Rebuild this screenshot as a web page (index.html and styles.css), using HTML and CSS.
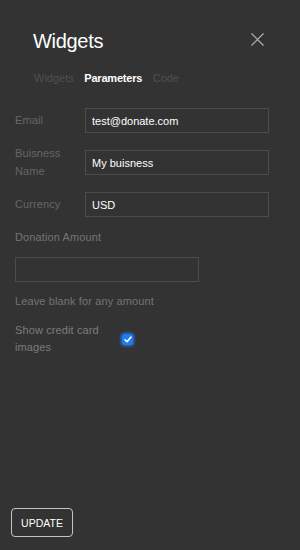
FILE: index.html
```html
<!DOCTYPE html>
<html lang="en">
<head>
    <meta charset="UTF-8">
    <meta name="viewport" content="width=device-width, initial-scale=1.0">
    <title>Widgets</title>
    <link rel="stylesheet" href="styles.css">
</head>
<body>
    <div class="panel">
        <div class="header">
            <h1>Widgets</h1>
            <svg class="close" width="13" height="13" viewBox="0 0 13 13">
                <path d="M0.5 0.5 L12.5 12.5 M12.5 0.5 L0.5 12.5" stroke="#b4b4b4" stroke-width="1.1" fill="none"/>
            </svg>
        </div>
        <div class="tabs">
            <span class="tab">Widgets</span>
            <span class="tab active">Parameters</span>
            <span class="tab">Code</span>
        </div>
        <div class="form">
            <div class="row">
                <label>Email</label>
                <input type="text" value="test@donate.com">
            </div>
            <div class="row">
                <label>Buisness<br>Name</label>
                <input type="text" value="My buisness">
            </div>
            <div class="row">
                <label>Currency</label>
                <input type="text" value="USD">
            </div>
            <div class="block">
                <label>Donation Amount</label>
                <input type="text" class="amount" value="">
                <p class="hint">Leave blank for any amount</p>
            </div>
            <div class="check-row">
                <label>Show credit card images</label>
                <span class="checkbox">
                    <svg width="8" height="7" viewBox="0 0 8 7">
                        <path d="M1 3.8 L3 5.8 L7 1" stroke="#fff" stroke-width="1.6" fill="none" stroke-linecap="round" stroke-linejoin="round"/>
                    </svg>
                </span>
            </div>
        </div>
        <div class="footer">
            <button class="update">UPDATE</button>
        </div>
    </div>
</body>
</html>
```

FILE: styles.css
```css
body {
    font-family: "Liberation Sans", Arial, sans-serif;
    background-color: #333333;
    margin: 0;
    padding: 0;
}
.panel {
    display: flex;
    flex-direction: column;
    min-height: 550px;
    box-sizing: border-box;
    padding: 29px 0 13px 0;
}
.header {
    display: flex;
    justify-content: space-between;
    align-items: flex-start;
    padding: 0 36px 0 33px;
}
.header h1 {
    margin: 0;
    font-size: 20px;
    line-height: 24px;
    font-weight: normal;
    letter-spacing: -0.3px;
    color: #ffffff;
}
.close {
    margin-top: 4px;
}
.tabs {
    display: flex;
    gap: 10.5px;
    padding-left: 34px;
    margin-top: 19px;
    font-size: 11px;
    line-height: 13px;
}
.tab {
    color: #505050;
}
.tab.active {
    color: #ffffff;
    font-weight: bold;
    letter-spacing: -0.2px;
}
.form {
    display: flex;
    flex-direction: column;
    gap: 12px;
    margin-top: 23px;
    padding: 0 31px 0 15px;
}
.row {
    display: flex;
    align-items: center;
}
.row label {
    width: 70px;
    font-size: 11px;
    line-height: 17.5px;
    letter-spacing: 0.1px;
    color: #666666;
}
input {
    font-family: "Liberation Sans", Arial, sans-serif;
    font-size: 11px;
    color: #ffffff;
    background-color: #333333;
    border: 1px solid #4c4c4c;
    border-radius: 0;
    height: 25px;
    box-sizing: border-box;
    padding: 0 6px;
    width: 184px;
    outline: none;
}
.block {
    display: flex;
    flex-direction: column;
    gap: 11px;
}
.block label, .hint {
    font-size: 11px;
    line-height: 17px;
    letter-spacing: 0.12px;
    color: #747474;
    margin: 0;
}
.check-row {
    display: flex;
    align-items: center;
}
.check-row label {
    width: 96px;
    margin-right: 11px;
    font-size: 11px;
    line-height: 17px;
    letter-spacing: 0.12px;
    color: #7c7c7c;
}
.checkbox {
    display: flex;
    align-items: center;
    justify-content: center;
    width: 11px;
    height: 11px;
    border-radius: 3px;
    background-color: #1f7cf3;
    box-shadow: 0 0 2px 2px rgba(40, 120, 230, 0.55);
}
.footer {
    margin-top: auto;
    padding-left: 11px;
}
.update {
    font-family: "Liberation Sans", Arial, sans-serif;
    font-size: 10.5px;
    color: #ffffff;
    background-color: transparent;
    border: 1px solid #c4c4c4;
    border-radius: 4px;
    height: 29px;
    width: 62px;
    padding: 0;
}
```
